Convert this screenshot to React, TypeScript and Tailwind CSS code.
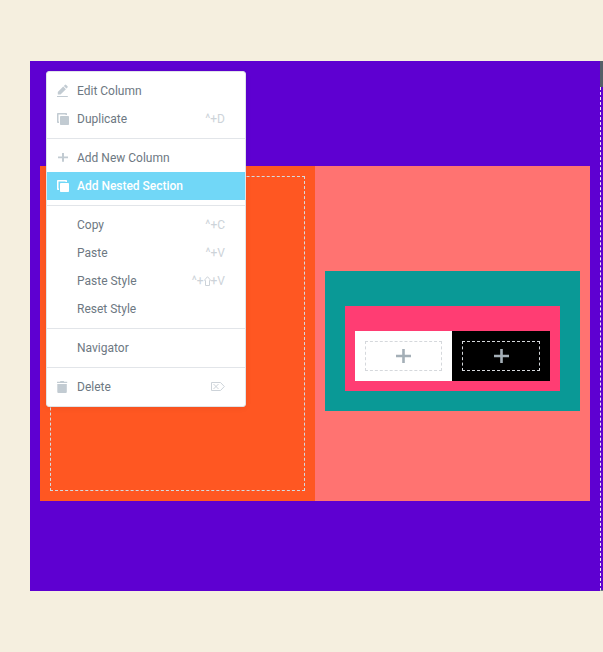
import React from "react";

type Item = { label: string; icon?: React.ReactNode; shortcut?: React.ReactNode; active?: boolean };

const Pencil = () => (
  <svg width="12" height="14" viewBox="0 0 12 14" fill="currentColor">
    <path d="M.8 10.500V8L6.200 2.600l2.700 2.700L3.500 10.500zM6.800 2L7.900.9q.7-.6 1.300 0l1.300 1.300q.6.6 0 1.300L9.500 4.600z" />
    <path d="M0 12h10.800v1H0z" />
  </svg>
);

const Clone = () => (
  <svg width="12" height="12" viewBox="0 0 12 12" fill="currentColor">
    <path d="M.8 0h8.400q.8 0 .8.8V2H8.500V1.500h-7v7H2V10H.8Q0 10 0 9.200V.8Q0 0 .8 0z" />
    <rect x="3" y="3" width="9" height="9" rx=".8" />
  </svg>
);

const Plus = () => (
  <svg width="12" height="12" viewBox="0 0 12 12" fill="currentColor">
    <path d="M5 1h2v3.500h4v1.700H7v3.600H5V6.200H1V4.500h4z" />
  </svg>
);

const Trash = () => (
  <svg width="12" height="12" viewBox="0 0 12 12" fill="currentColor">
    <path d="M0 .8h3L3.500 0h3.200l.5.8h3V2H0zM.3 3h9.500v8q0 1-1 1H1.300q-1 0-1-1z" />
  </svg>
);

const Shift = () => (
  <svg width="7" height="10" viewBox="0 0 7 10" fill="none" stroke="currentColor" strokeWidth="1">
    <path d="M3.500.7L6.300 3.900V4.500H5.500V9.500H1.500V4.500H.7V3.900z" />
  </svg>
);

const ForwardDelete = () => (
  <svg width="14" height="10" viewBox="0 0 14 10" fill="none" stroke="currentColor" strokeWidth="1">
    <path d="M.5.500H9.500L13.300 4.500 9.500 8.500H.5zM2.500 2l5 5M7.500 2l-5 5" />
  </svg>
);

const groups: Item[][] = [
  [
    { label: "Edit Column", icon: <Pencil /> },
    { label: "Duplicate", icon: <Clone />, shortcut: "^+D" },
  ],
  [
    { label: "Add New Column", icon: <Plus /> },
    { label: "Add Nested Section", icon: <Clone />, active: true },
  ],
  [
    { label: "Copy", shortcut: "^+C" },
    { label: "Paste", shortcut: "^+V" },
    { label: "Paste Style", shortcut: <>^+<Shift />+V</> },
    { label: "Reset Style" },
  ],
  [{ label: "Navigator" }],
  [{ label: "Delete", icon: <Trash />, shortcut: <ForwardDelete /> }],
];

function ContextMenu() {
  return (
    <div className="absolute left-4 top-2.5 z-10 w-[200px] rounded-[3px] border border-[#e0e4e8] bg-white text-xs shadow-[0_1px_6px_rgba(0,0,0,0.06)]">
      {groups.map((items, i) => (
        <div key={i} className="border-b border-[#e2e5e9] py-[5px] last:border-b-0">
          {items.map((item) => (
            <div
              key={item.label}
              className={
                item.active
                  ? "flex h-7 items-center bg-[#71d7f7] pl-2.5 pr-5 font-medium tracking-[-0.02px] text-white"
                  : "flex h-7 items-center pl-2.5 pr-5 text-[#6d7882]"
              }
            >
              <span className={item.active ? "w-5 text-white" : "w-5 text-[#c2cbd2]"}>{item.icon}</span>
              <span>{item.label}</span>
              <span className="ml-auto flex items-center text-[#cdd3d9]">{item.shortcut}</span>
            </div>
          ))}
        </div>
      ))}
    </div>
  );
}

function EmptyColumn({ dark = false }: { dark?: boolean }) {
  return (
    <div className={dark ? "w-[98px] bg-black p-2.5" : "w-[97px] bg-white p-2.5"}>
      <div className="flex h-[30px] items-center justify-center border border-dashed border-[#d5d8dc]">
        <svg width="15" height="14" viewBox="0 0 15 14" fill="#a4afb7">
          <path d="M6.200 0h2.600v5.800H15v2.400H8.800V14H6.200V8.200H0V5.800h6.200z" />
        </svg>
      </div>
    </div>
  );
}

export default function App() {
  return (
    <main className="h-[652px] w-[603px] overflow-hidden bg-[#f5efdf] pl-[30px] pt-[61px] font-['Roboto',sans-serif]">
      <div className="relative flex h-[530px] bg-[#5e00d1]">
        <ContextMenu />
        <section className="w-[570px] px-2.5 pt-[105px]">
          <div className="flex h-[335px]">
            <div className="w-[275px] bg-[#ff5722] p-2.5">
              <div className="h-full border border-dashed border-[#d5dadf]" />
            </div>
            <div className="w-[275px] bg-[#ff7371] px-2.5 pt-[105px]">
              <div className="h-[140px] bg-[#0a9996] px-5 pt-[35px]">
                <div className="h-[85px] bg-[#ff3d73] px-2.5 pt-[25px]">
                  <div className="flex h-[50px]">
                    <EmptyColumn />
                    <EmptyColumn dark />
                  </div>
                </div>
              </div>
            </div>
          </div>
        </section>
        <aside className="flex w-[3px] flex-col">
          <div className="h-[26px] bg-[#556068]" />
          <div className="flex-1 border-b border-l border-b-[#6d7882] border-l-[#e8e8f0] [border-left-style:dashed]" />
        </aside>
      </div>
    </main>
  );
}
